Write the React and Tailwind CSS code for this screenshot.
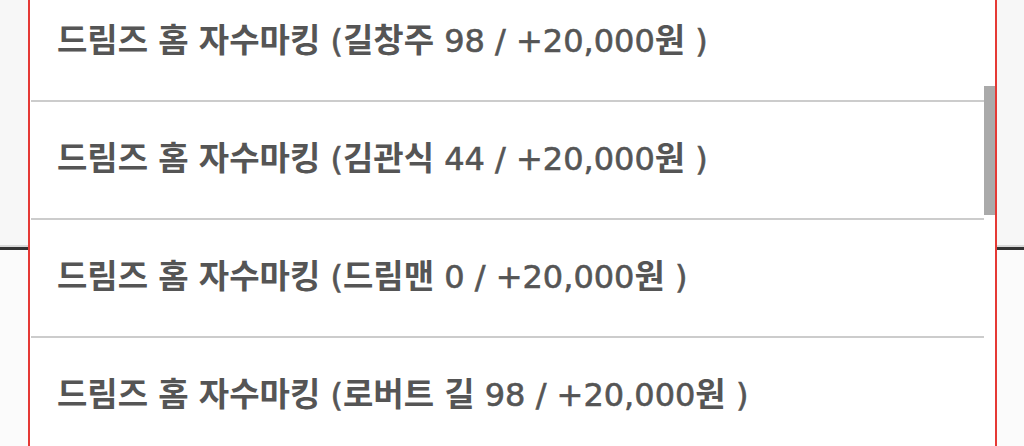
import React from "react";

const items = [
  "드림즈 홈 자수마킹 (길창주 98 / +20,000원 )",
  "드림즈 홈 자수마킹 (김관식 44 / +20,000원 )",
  "드림즈 홈 자수마킹 (드림맨 0 / +20,000원 )",
  "드림즈 홈 자수마킹 (로버트 길 98 / +20,000원 )",
];

function Label({ text }) {
  const parts = text.split(/([\uAC00-\uD7A3]+)/).filter((p) => p.length > 0);
  return (
    <span>
      {parts.map((p, i) =>
        /[\uAC00-\uD7A3]/.test(p) ? (
          <span
            key={i}
            className="font-bold text-[33px]"
            style={{ fontFamily: "'Noto Sans CJK KR', sans-serif" }}
          >
            {p}
          </span>
        ) : (
          <span
            key={i}
            className="font-normal text-[32px] [-webkit-text-stroke:0.6px_#555555]"
            style={{ fontFamily: "'DejaVu Sans', sans-serif" }}
          >
            {p}
          </span>
        )
      )}
    </span>
  );
}

export default function App() {
  return (
    <div className="relative w-[1024px] h-[446px] overflow-hidden bg-[#fbfbfb]">
      {/* page behind the menu */}
      <div className="flex flex-col">
        <div className="h-[245px] bg-[#f7f7f7]" />
        <div className="h-[2px] bg-[#d9d9d9]" />
        <div className="h-[3px] bg-[#333333]" />
      </div>

      {/* dropdown menu */}
      <div className="absolute left-[28px] top-0 w-[969px] h-[446px] border-x-2 border-[#e53935] bg-white flex overflow-hidden">
        <div className="flex-1 pl-[1px]">
          <ul className="-mt-[16px] flex flex-col">
            {items.map((t, i) => (
              <li
                key={i}
                className="h-[118px] border-b-2 border-[#cccccc] flex items-center pl-[26px] pb-[6px] leading-none text-[#555555] whitespace-nowrap"
              >
                <Label text={t} />
              </li>
            ))}
          </ul>
        </div>
        <div className="w-[11px] shrink-0 pt-[86px]">
          <div className="h-[129px] bg-[#aaaaaa]" />
        </div>
      </div>
    </div>
  );
}
